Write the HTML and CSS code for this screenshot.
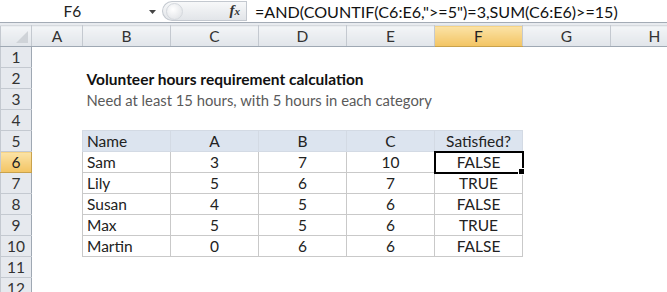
FILE: index.html
```html
<!DOCTYPE html>
<html lang="en">
<head>
    <meta charset="UTF-8">
    <meta name="viewport" content="width=device-width, initial-scale=1.0">
    <title>Volunteer hours requirement</title>
    <link rel="stylesheet" href="styles.css">
</head>
<body>
    <div class="formula-bar">
        <div class="name-box">F6</div>
        <div class="name-drop">
            <svg width="7" height="4" viewBox="0 0 7 4"><path d="M0 0h7L3.5 4z" fill="#444"/></svg>
        </div>
        <div class="fx-pill">
            <span class="knob"></span>
            <span class="fx"><i>f</i><span>x</span></span>
        </div>
        <div class="formula">=AND(COUNTIF(C6:E6,"&gt;=5")=3,SUM(C6:E6)&gt;=15)</div>
    </div>
    <div class="band"></div>
    <div class="sheet">
        <table>
            <colgroup>
                <col class="c-head">
                <col class="c-a">
                <col class="c-std"><col class="c-std"><col class="c-std">
                <col class="c-std"><col class="c-std"><col class="c-std">
                <col class="c-std">
            </colgroup>
            <thead>
                <tr>
                    <th class="corner"><span class="tri"></span></th>
                    <th>A</th><th>B</th><th>C</th><th>D</th>
                    <th>E</th><th class="sel">F</th><th>G</th><th>H</th>
                </tr>
            </thead>
            <tbody>
                <tr><th>1</th><td></td><td></td><td></td><td></td><td></td><td></td><td></td><td></td></tr>
                <tr><th>2</th><td></td><td class="title">Volunteer hours requirement calculation</td><td></td><td></td><td></td><td></td><td></td><td></td></tr>
                <tr><th>3</th><td></td><td class="sub">Need at least 15 hours, with 5 hours in each category</td><td></td><td></td><td></td><td></td><td></td><td></td></tr>
                <tr><th>4</th><td></td><td></td><td></td><td></td><td></td><td></td><td></td><td></td></tr>
                <tr class="hdr"><th>5</th><td></td><td class="t">Name</td><td class="t num">A</td><td class="t num">B</td><td class="t num">C</td><td class="t num">Satisfied?</td><td></td><td></td></tr>
                <tr><th class="sel">6</th><td></td><td class="t">Sam</td><td class="t num">3</td><td class="t num">7</td><td class="t num">10</td><td class="t num active">FALSE</td><td></td><td></td></tr>
                <tr><th>7</th><td></td><td class="t">Lily</td><td class="t num">5</td><td class="t num">6</td><td class="t num">7</td><td class="t num">TRUE</td><td></td><td></td></tr>
                <tr><th>8</th><td></td><td class="t">Susan</td><td class="t num">4</td><td class="t num">5</td><td class="t num">6</td><td class="t num">FALSE</td><td></td><td></td></tr>
                <tr><th>9</th><td></td><td class="t">Max</td><td class="t num">5</td><td class="t num">5</td><td class="t num">6</td><td class="t num">TRUE</td><td></td><td></td></tr>
                <tr><th>10</th><td></td><td class="t">Martin</td><td class="t num">0</td><td class="t num">6</td><td class="t num">6</td><td class="t num">FALSE</td><td></td><td></td></tr>
                <tr><th>11</th><td></td><td></td><td></td><td></td><td></td><td></td><td></td><td></td></tr>
                <tr><th>12</th><td></td><td></td><td></td><td></td><td></td><td></td><td></td><td></td></tr>
            </tbody>
        </table>
    </div>
</body>
</html>
```

FILE: styles.css
```css
body {
    margin: 0;
    width: 667px;
    height: 292px;
    overflow: hidden;
    background: #fff;
    font-family: Lato, "Open Sans", sans-serif;
    font-size: 15.5px;
    color: #222;
}
.formula-bar {
    display: flex;
    align-items: center;
    height: 22px;
    border-bottom: 1px solid #a3abb5;
    background: #fff;
}
.name-box {
    width: 145px;
    text-align: center;
    color: #222;
}
.name-drop {
    width: 14px;
    display: flex;
    justify-content: center;
    padding-top: 2px;
}
.fx-pill {
    position: relative;
    width: 85px;
    height: 20px;
    margin-left: 3px;
    border: 1px solid #c3c8cf;
    border-right: none;
    border-radius: 11px 0 0 11px;
    background: linear-gradient(#f7f8f9, #e2e5e9);
    box-sizing: border-box;
    display: flex;
    align-items: center;
    justify-content: flex-end;
}
.knob {
    position: absolute;
    left: 3px;
    top: 1px;
    width: 15px;
    height: 15px;
    border-radius: 50%;
    background: radial-gradient(circle at 40% 35%, #fff, #e6e8eb 70%);
    border: 1px solid #d4d8dd;
}
.fx {
    font-family: "Liberation Serif", serif;
    font-weight: bold;
    font-size: 15px;
    color: #333;
    padding-right: 6px;
    border-right: 1px solid #c3c8cf;
    height: 20px;
    line-height: 19px;
}
.fx span {
    font-size: 11px;
    font-style: italic;
}
.formula {
    padding-left: 8px;
    white-space: nowrap;
    font-size: 16.1px;
    color: #111;
}
.band {
    height: 2px;
    background: #e8ebef;
}
.sheet {
    width: 667px;
    overflow: hidden;
}
table {
    border-collapse: collapse;
    table-layout: fixed;
    width: 698px;
}
.c-head { width: 31px; }
.c-a { width: 51px; }
.c-std { width: 88px; }
th, td {
    height: 21px;
    padding: 0 4px;
    box-sizing: border-box;
    white-space: nowrap;
    overflow: visible;
    vertical-align: bottom;
    line-height: 19px;
}
th {
    font-weight: normal;
    color: #333;
    background: linear-gradient(#f3f5f7, #e1e5ea);
    border: 1px solid #c4c9d0;
    text-align: center;
    padding: 0;
}
thead th {
    border-top: 1px solid #d6dade;
    border-bottom: 1px solid #9fa8b3;
}
tbody th {
    background: #e6e9ee;
    border-right: 1px solid #9fa8b3;
}
th.sel {
    background: linear-gradient(#fbe3a7, #f3c462);
    color: #222;
    border-bottom-color: #c9a24c;
}
tbody th.sel {
    border-right-color: #c9a24c;
}
.corner {
    position: relative;
}
.tri {
    position: absolute;
    right: 3px;
    bottom: 3px;
    width: 0;
    height: 0;
    border-left: 12px solid transparent;
    border-bottom: 12px solid #cfd3d8;
}
.title {
    font-weight: bold;
    color: #111;
}
.sub {
    font-size: 14.8px;
    color: #5a5a5a;
}
.t {
    border: 1px solid #c9c9c9;
}
.num {
    text-align: center;
}
.hdr .t {
    background: #dce4ef;
    border-color: #d3dae4;
}
td.active {
    position: relative;
    outline: 2px solid #000;
    outline-offset: -1px;
}
td.active::after {
    content: "";
    position: absolute;
    right: -3px;
    bottom: -3px;
    width: 5px;
    height: 5px;
    background: #000;
    border: 1px solid #fff;
}
```
